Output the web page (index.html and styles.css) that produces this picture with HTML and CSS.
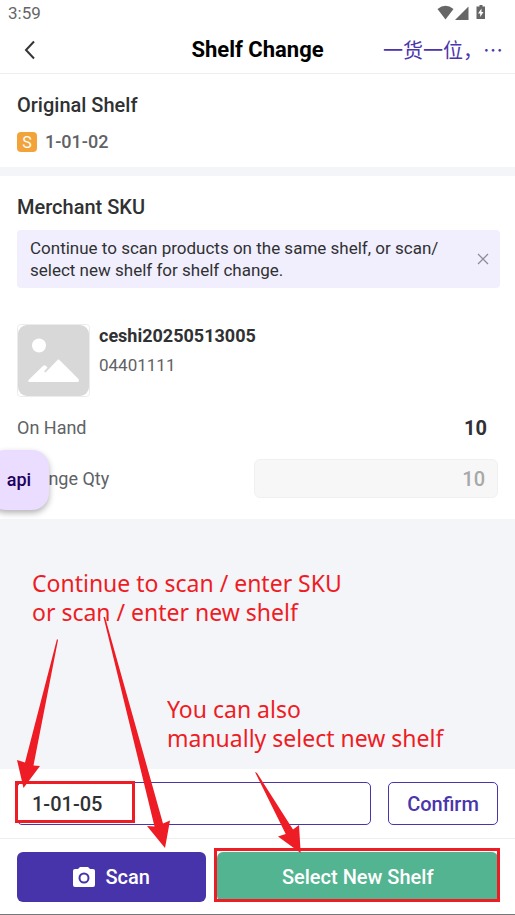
FILE: index.html
```html
<!DOCTYPE html>
<html lang="en">
<head>
<meta charset="utf-8">
<meta name="viewport" content="width=device-width, initial-scale=1">
<title>Shelf Change</title>
<link rel="stylesheet" href="styles.css">
</head>
<body>
<header class="top">
  <div class="status">
    <span>3:59</span>
    <svg class="status-icons" width="50" height="16" viewBox="0 0 50 16" fill="#666" aria-hidden="true">
      <path d="M1.500 4Q9.500 -2.500 17.500 4L9.500 14.500Z"/>
      <path d="M19 15L32.500 1.500V15Z"/>
      <path fill-rule="evenodd" d="M41.500 1.500H43.500V0H46.500V1.500H49V14H40.500V1.500ZM45.500 3.500L42 8.500H44.200V12L47.500 7H45.500Z"/>
    </svg>
  </div>
  <div class="bar">
    <button class="back" type="button" aria-label="Back">
      <svg width="14" height="20" viewBox="0 0 14 20" fill="none" stroke="#333538" stroke-width="2" aria-hidden="true"><path d="M11 1.500L3 10L11 18.500"/></svg>
    </button>
    <h1 class="title">Shelf Change</h1>
    <a class="warehouse" href="#">一货一位，⋯</a>
  </div>
</header>

<section class="panel origin">
  <h2 class="heading">Original Shelf</h2>
  <p class="shelf"><span class="tag">S</span>1-01-02</p>
</section>

<section class="panel sku">
  <h2 class="heading">Merchant SKU</h2>
  <div class="notice">
    <p class="notice-text">Continue to scan products on the same shelf, or scan/<wbr>select new shelf for shelf change.</p>
    <button class="close" type="button" aria-label="Close">
      <svg width="12" height="12" viewBox="0 0 12 12" stroke="#8d8c99" stroke-width="1.300" aria-hidden="true"><path d="M1 1L11 11M11 1L1 11"/></svg>
    </button>
  </div>
  <div class="product">
    <svg class="thumb" width="73" height="73" viewBox="0 0 73 73" aria-hidden="true">
      <rect x=".5" y=".5" width="72" height="72" rx="3" fill="#fff" stroke="#ececec"/>
      <rect x="1" y="1" width="71" height="71" rx="9" fill="#d8d8d8"/>
      <circle cx="22" cy="21.500" r="7" fill="#fff"/>
      <path d="M12 55.500L26 42Q27.500 40.500 29 42L30.500 43.500L27 47.500L28.500 48.500L40 36.500Q41.500 34.500 43 36.500L61.500 55Q63 58 60 58H13Q10 58 12 55.500Z" fill="#fff"/>
    </svg>
    <div>
      <p class="name">ceshi20250513005</p>
      <p class="code">04401111</p>
    </div>
  </div>
  <div class="row">
    <span>On Hand</span>
    <span class="count">10</span>
  </div>
  <div class="row">
    <label for="qty">Change Qty</label>
    <input class="qty" id="qty" value="10" disabled>
    <button class="api" type="button">api</button>
  </div>
</section>

<main class="notes">
  <p class="note">Continue to scan / enter SKU<br>or scan / enter new shelf</p>
  <p class="note note-second">You can also<br>manually select new shelf</p>
</main>

<footer class="bottom">
  <form class="entry">
    <div class="field">
      <input class="shelf-input" aria-label="Shelf" value="1-01-05">
      <span class="mark mark-input"></span>
    </div>
    <button class="confirm" type="button">Confirm</button>
  </form>
  <div class="actions">
    <button class="scan" type="button">
      <svg width="22" height="20" viewBox="0 0 22 20" aria-hidden="true">
        <path fill="#fff" fill-rule="evenodd" d="M7 0H15L17 2H20Q22 2 22 4V18Q22 20 20 20H2Q0 20 0 18V4Q0 2 2 2H5ZM11 5.500A5.500 5.500 0 1 0 11 16.500A5.500 5.500 0 1 0 11 5.500ZM11 7.500A3.500 3.500 0 1 1 11 14.500A3.500 3.500 0 1 1 11 7.500Z"/>
      </svg>
      Scan
    </button>
    <div class="select-wrap">
      <button class="select" type="button">Select New Shelf</button>
      <span class="mark mark-select"></span>
    </div>
  </div>
</footer>

<svg class="arrows" width="515" height="915" viewBox="0 0 515 915" fill="#ee1c25" aria-hidden="true">
  <path d="M57 639L58 640L33.500 765.500L40 766L23.500 788L17 760L25 762.500Z"/>
  <path d="M103.500 617L105 617L163 823.500L170 820.500L165 848L147 826L154.500 826.500Z"/>
  <path d="M255 772L257 773L293 829.500L299 825L300.700 853L278 836.500L285.700 834Z"/>
</svg>
</body>
</html>
```
FILE: styles.css
```css
* { box-sizing: border-box; }

body {
  margin: 0;
  min-height: 100vh;
  position: relative;
  display: flex;
  flex-direction: column;
  background: #f4f5f8;
  color: #303133;
  font-family: Roboto, "Noto Sans CJK SC", sans-serif;
}

h1, h2, p { margin: 0; }
button, input { font: inherit; color: inherit; }
button { padding: 0; border: 0; background: none; }

.top {
  background: #fff;
  border-bottom: 1px solid #eeeeef;
}

.status {
  display: flex;
  justify-content: space-between;
  align-items: center;
  height: 26px;
  padding: 0 29px 0 8px;
  color: #666;
  font-size: 17px;
}

.bar {
  display: grid;
  grid-template-columns: 1fr auto 1fr;
  align-items: center;
  height: 47px;
  padding: 0 12px;
}

.back { display: flex; justify-self: start; padding-left: 11px; }
.title { color: #000; font-size: 22px; line-height: 28px; font-weight: 700; }

.warehouse {
  justify-self: end;
  color: #4a35ab;
  font-family: "Noto Sans CJK SC", sans-serif;
  font-size: 20px;
  line-height: 28px;
  font-weight: 400;
  text-decoration: none;
  white-space: nowrap;
}

.panel { background: #fff; }
.heading { font-size: 20px; line-height: 24px; font-weight: 500; }

.origin { padding: 19px 17px 13px; margin-bottom: 9px; }

.shelf {
  display: flex;
  align-items: center;
  gap: 8px;
  margin-top: 13px;
  color: #606266;
  font-size: 18px;
  line-height: 24px;
  font-weight: 500;
}

.tag {
  width: 20px;
  height: 20px;
  border-radius: 4px;
  background: #f2a33a;
  color: #fff;
  font-size: 16px;
  line-height: 21px;
  font-weight: 400;
  text-align: center;
}

.sku { padding: 19px 17px 21px; }

.notice {
  display: flex;
  align-items: center;
  justify-content: space-between;
  margin: 11px -2px 0 0;
  padding: 7px 11px 7px 13px;
  border-radius: 4px;
  background: #f1effe;
}

.notice-text { max-width: 410px; font-size: 17px; line-height: 22px; }
.close { display: flex; }

.product { display: flex; gap: 9px; margin-top: 36px; }
.name { font-size: 18px; line-height: 24px; font-weight: 700; }
.code { margin-top: 5px; color: #606266; font-size: 17px; line-height: 24px; }

.row {
  position: relative;
  display: flex;
  align-items: center;
  justify-content: space-between;
  color: #606266;
  font-size: 18px;
  line-height: 24px;
}
.product + .row { margin: 19px 0; }

.count {
  padding-right: 11px;
  color: #303133;
  font-size: 20px;
  font-weight: 700;
}

.qty {
  width: 244px;
  height: 39px;
  padding: 0 12px;
  border: 1px solid #f0f0f1;
  border-radius: 6px;
  background: #f7f7f7;
  color: #a8a8a8;
  font-size: 20px;
  font-weight: 500;
  text-align: right;
}

.api {
  position: absolute;
  top: -9px;
  left: -28px;
  width: 60px;
  height: 60px;
  border-radius: 17px;
  background: #eaddff;
  box-shadow: 0 3px 6px rgba(0, 0, 0, 0.3);
  color: #21005d;
  font-size: 18px;
  font-weight: 500;
}

.notes { flex: 1; padding: 50px 32px 14px; }

.note {
  color: #ee1c25;
  font-family: "Noto Sans", sans-serif;
  font-size: 23px;
  line-height: 29px;
}
.note-second { margin: 68px 0 0 135px; }

.bottom { background: #fff; border-bottom: 1px solid #77777a; }

.entry {
  display: flex;
  gap: 17px;
  padding: 13px 17px;
  border-bottom: 1px solid #eeeeef;
}

.field { position: relative; flex: 1; }

.shelf-input {
  display: block;
  width: 100%;
  height: 43px;
  padding: 0 14px;
  border: 1px solid #4a35ab;
  border-radius: 5px;
  background: #fff;
  font-size: 20px;
  font-weight: 500;
}

.confirm {
  width: 110px;
  border: 1px solid #4a35ab;
  border-radius: 5px;
  color: #4a35ab;
  font-size: 20px;
  font-weight: 500;
}

.actions {
  display: grid;
  grid-template-columns: 27fr 40fr;
  gap: 11px;
  padding: 13px 17px 12px;
  color: #fff;
  font-size: 20px;
  font-weight: 500;
}

.scan {
  display: flex;
  align-items: center;
  justify-content: center;
  gap: 10px;
  height: 50px;
  border-radius: 6px;
  background: #4834aa;
}

.select-wrap { position: relative; }
.select { width: 100%; height: 50px; border-radius: 6px; background: #53b491; }

.mark { position: absolute; border: 3px solid #ee1c25; pointer-events: none; }
.mark-input { top: -1px; left: -2px; width: 120px; height: 42px; }
.mark-select { inset: -4px -2px 0 -3px; }

.arrows { position: absolute; top: 0; left: 0; pointer-events: none; }
```
